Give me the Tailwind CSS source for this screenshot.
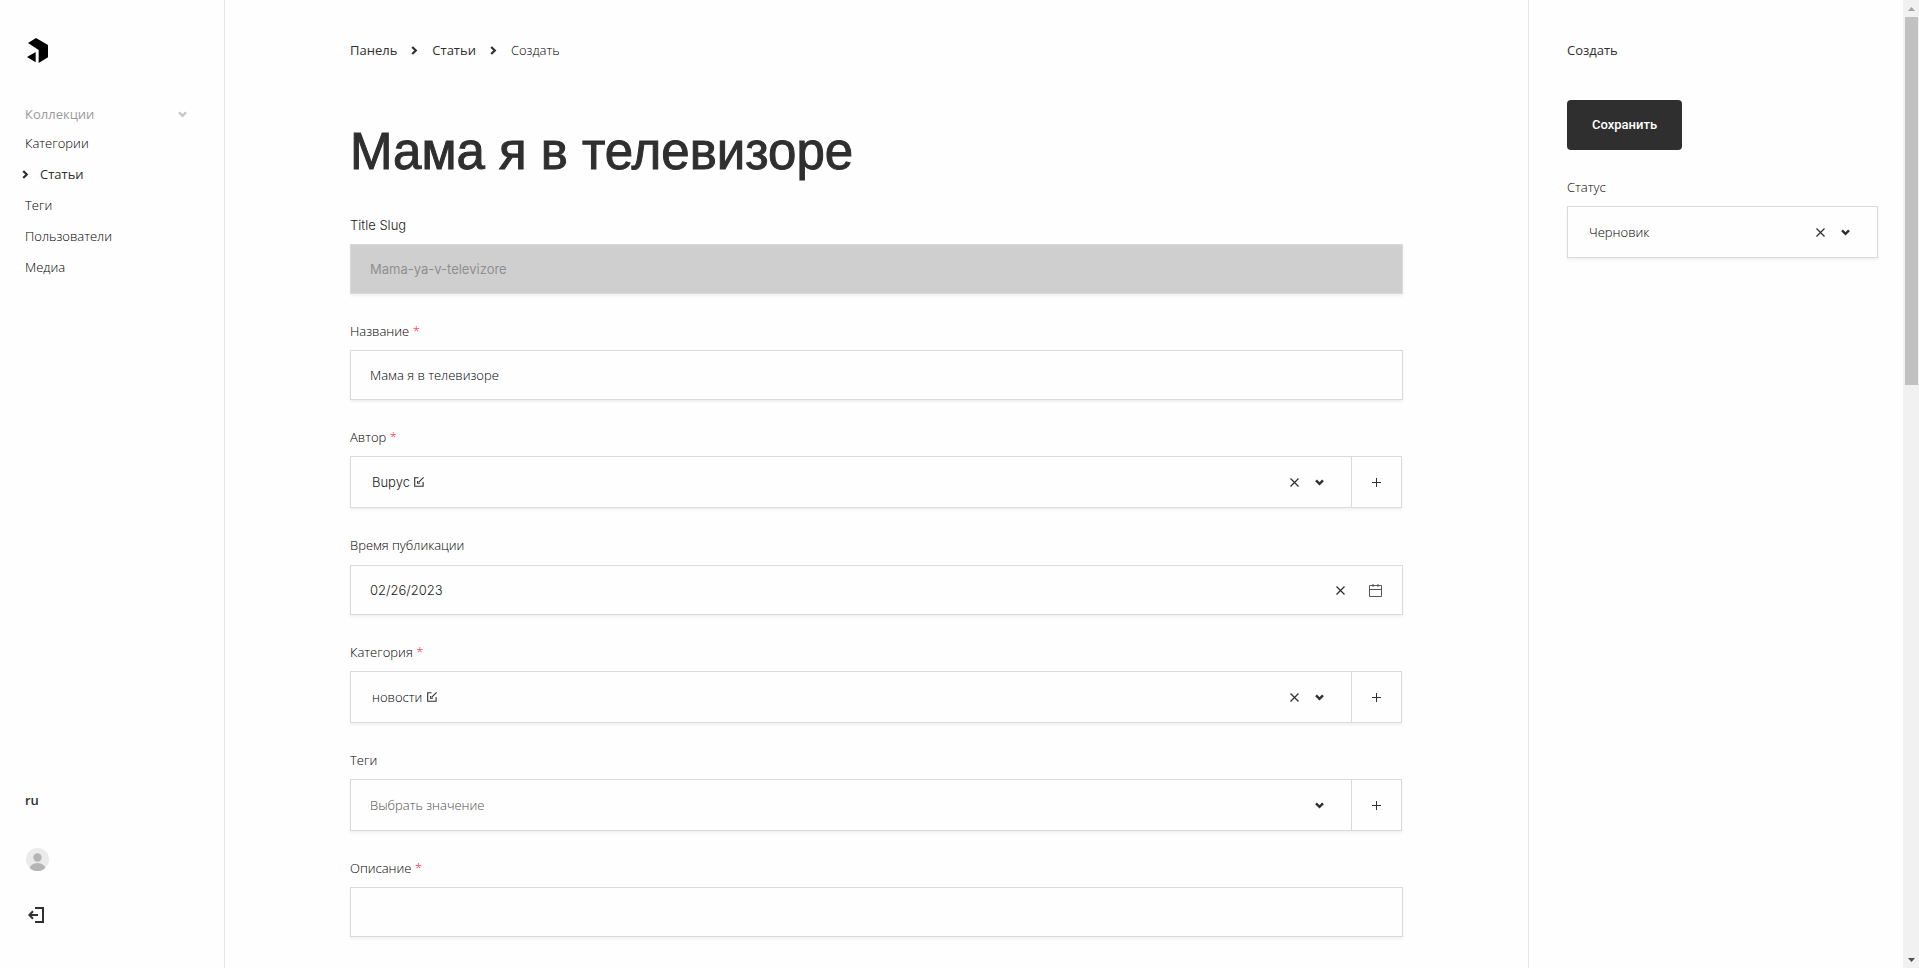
<!DOCTYPE html>
<html lang="ru">
<head>
<meta charset="utf-8">
<title>Мама я в телевизоре</title>
<script src="https://cdn.jsdelivr.net/npm/@tailwindcss/browser@4"></script>
</head>
<body class="flex h-screen overflow-hidden bg-[#fefefe] font-['Open_Sans',sans-serif] text-[13px] leading-5 font-light text-black">
<svg class="hidden" aria-hidden="true">
  <symbol id="chevron" viewBox="0 0 9 7"><path d="M1 1.3 4.5 4.8 8 1.3" fill="none" stroke="currentColor" stroke-width="2.4"/></symbol>
  <symbol id="chevron-right" viewBox="0 0 7 9"><path d="M1.2 1 4.8 4.5 1.2 8" fill="none" stroke="currentColor" stroke-width="2.2"/></symbol>
  <symbol id="cross" viewBox="0 0 9 9"><path d="M.5.5l8 8M8.500.5l-8 8" fill="none" stroke="#2f2f2f" stroke-width="1.2"/></symbol>
  <symbol id="plus" viewBox="0 0 9 9"><path d="M4.500 0v9M0 4.500h9" fill="none" stroke="#2f2f2f" stroke-width="1"/></symbol>
  <symbol id="edit" viewBox="0 0 10 10"><path d="M4.500.7H.7v8.600h8.400V5M9.600.4 4.800 5.200M3.600 4v2.300h2.300" fill="none" stroke="#2f2f2f" stroke-width="1.100"/></symbol>
</svg>

<aside class="flex w-[225px] shrink-0 flex-col border-r border-[#e6e6e6] px-[25px]">
  <a href="#" aria-label="Панель" class="mt-[38px] ml-[2px] block w-[21px] text-black">
    <svg viewBox="82 54 63 75" class="h-[25px] w-[21px]" fill="currentColor"><path d="M85 69 109 54 145 75V112L117 129V90zM82 111 108 96V127z"/></svg>
  </a>
  <nav class="mt-[41px]">
    <button class="flex w-full items-center justify-between pr-[11px] font-normal text-[#9a9a9a]">Коллекции
      <svg class="mr-px h-[7px] w-[9px] text-[#c8c8c8]"><use href="#chevron"/></svg></button>
    <ul class="mt-[9px] flex flex-col gap-[11px]">
      <li><a href="#">Категории</a></li>
      <li><a href="#" class="-ml-[3px] flex items-center gap-[11px] font-medium text-[#2f2f2f]"><svg class="h-[9px] w-[7px]"><use href="#chevron-right"/></svg>Статьи</a></li>
      <li><a href="#">Теги</a></li>
      <li><a href="#">Пользователи</a></li>
      <li><a href="#">Медиа</a></li>
    </ul>
  </nav>
  <div class="mt-auto flex flex-col items-start pb-[45px]">
    <a href="#" class="font-semibold text-[#2f2f2f]">ru</a>
    <a href="#" aria-label="Аккаунт" class="mt-[38px] ml-px">
      <svg viewBox="0 0 23 23" class="size-[23px]"><clipPath id="disc"><circle cx="11.500" cy="11.500" r="11.500"/></clipPath><g clip-path="url(#disc)"><path d="M0 0h23v23H0z" fill="#ebebeb"/><circle cx="11.500" cy="9.500" r="4.200" fill="#b5b5b5"/><ellipse cx="11.500" cy="21" rx="8" ry="6" fill="#b5b5b5"/></g></svg>
    </a>
    <a href="#" aria-label="Выйти" class="mt-9 ml-[3px] text-[#2f2f2f]">
      <svg viewBox="0 0 16 16" class="size-4" fill="none" stroke="currentColor" stroke-width="2"><path d="M7 1h8v14H7M10 8H1.500M5 4.300 1.300 8 5 11.700"/></svg>
    </a>
  </div>
</aside>

<main class="min-w-0 flex-1 overflow-hidden px-[125px] pt-10">
  <nav aria-label="Навигация" class="flex items-center font-medium text-[#2f2f2f]">
    <a href="#">Панель</a>
    <svg class="mx-[14px] h-[9px] w-[7px]"><use href="#chevron-right"/></svg>
    <a href="#">Статьи</a>
    <svg class="mx-[14px] h-[9px] w-[7px]"><use href="#chevron-right"/></svg>
    <span class="font-light text-black">Создать</span>
  </nav>
  <h1 class="mt-[62px] font-['Liberation_Sans',sans-serif] text-[51px] leading-[60px] font-normal text-[#2f2f2f] [-webkit-text-stroke:1px_#2f2f2f]">Мама я в телевизоре</h1>

  <form class="mt-[33px] flex flex-col gap-[27px]">
    <div class="flex flex-col gap-[9px]">
      <label for="slug" class="font-[Inter,sans-serif] text-[#222]">Title Slug</label>
      <input id="slug" disabled value="Mama-ya-v-televizore" class="h-[50px] w-full border border-[#dadada] bg-[#cfcfcf] px-[19px] font-[Inter,sans-serif] font-normal text-[#8f8f8f] shadow-[0_2px_3px_rgba(0,0,0,0.06)]">
    </div>
    <div class="flex flex-col gap-[9px]">
      <label for="name">Название <span class="text-[#ff2a40]">*</span></label>
      <input id="name" value="Мама я в телевизоре" class="h-[50px] w-full border border-[#dadada] px-[19px] shadow-[0_2px_3px_rgba(0,0,0,0.06)]">
    </div>
    <div class="flex flex-col gap-[9px]">
      <label for="author">Автор <span class="text-[#ff2a40]">*</span></label>
      <div class="mr-px flex h-[52px] border border-[#dadada] shadow-[0_2px_3px_rgba(0,0,0,0.06)]">
        <div class="flex flex-1 items-center pr-[27px] pl-[21px]">
          <select id="author" class="appearance-none font-[Inter,sans-serif] text-[#222]"><option>Bupyc</option></select>
          <a href="#" aria-label="Редактировать" class="ml-1"><svg class="size-[10px]"><use href="#edit"/></svg></a>
          <button type="button" aria-label="Очистить" class="ml-auto"><svg class="size-[9px]"><use href="#cross"/></svg></button>
          <svg class="ml-4 h-[7px] w-[9px] text-[#2f2f2f]"><use href="#chevron"/></svg>
        </div>
        <button type="button" aria-label="Добавить" class="flex w-[50px] items-center justify-center border-l border-[#dadada]"><svg class="size-[9px]"><use href="#plus"/></svg></button>
      </div>
    </div>
    <div class="flex flex-col gap-[10px]">
      <label for="date">Время публикации</label>
      <div class="flex h-[50px] items-center border border-[#dadada] pr-5 pl-[19px] shadow-[0_2px_3px_rgba(0,0,0,0.06)]">
        <input id="date" value="02/26/2023" class="min-w-0 flex-1 font-[Inter,sans-serif] text-[#222]">
        <button type="button" aria-label="Очистить"><svg class="size-[9px]"><use href="#cross"/></svg></button>
        <button type="button" aria-label="Календарь" class="ml-6"><svg viewBox="0 0 13 13" class="size-[13px]" fill="none" stroke="#555"><path d="M.5 1.500h12v11H.5zM.5 5.500h12M4 0v3M9 0v3"/></svg></button>
      </div>
    </div>
    <div class="flex flex-col gap-[9px]">
      <label for="category">Категория <span class="text-[#ff2a40]">*</span></label>
      <div class="mr-px flex h-[52px] border border-[#dadada] shadow-[0_2px_3px_rgba(0,0,0,0.06)]">
        <div class="flex flex-1 items-center pr-[27px] pl-[21px]">
          <select id="category" class="appearance-none"><option>новости</option></select>
          <a href="#" aria-label="Редактировать" class="ml-1"><svg class="size-[10px]"><use href="#edit"/></svg></a>
          <button type="button" aria-label="Очистить" class="ml-auto"><svg class="size-[9px]"><use href="#cross"/></svg></button>
          <svg class="ml-4 h-[7px] w-[9px] text-[#2f2f2f]"><use href="#chevron"/></svg>
        </div>
        <button type="button" aria-label="Добавить" class="flex w-[50px] items-center justify-center border-l border-[#dadada]"><svg class="size-[9px]"><use href="#plus"/></svg></button>
      </div>
    </div>
    <div class="flex flex-col gap-[9px]">
      <label for="tags">Теги</label>
      <div class="mr-px flex h-[52px] border border-[#dadada] shadow-[0_2px_3px_rgba(0,0,0,0.06)]">
        <div class="flex flex-1 items-center pr-[27px] pl-[19px]">
          <select id="tags" class="flex-1 appearance-none text-[#505050]"><option>Выбрать значение</option></select>
          <svg class="ml-4 h-[7px] w-[9px] text-[#2f2f2f]"><use href="#chevron"/></svg>
        </div>
        <button type="button" aria-label="Добавить" class="flex w-[50px] items-center justify-center border-l border-[#dadada]"><svg class="size-[9px]"><use href="#plus"/></svg></button>
      </div>
    </div>
    <div class="flex flex-col gap-[9px]">
      <label for="description">Описание <span class="text-[#ff2a40]">*</span></label>
      <input id="description" class="h-[50px] w-full border border-[#dadada] px-[19px] shadow-[0_2px_3px_rgba(0,0,0,0.06)]">
    </div>
  </form>
</main>

<aside class="flex w-[375px] shrink-0 flex-col items-start border-l border-[#e6e6e6] pt-10 pr-[25px] pl-[38px]">
  <h2 class="font-medium text-[#2f2f2f]">Создать</h2>
  <button class="mt-10 h-[50px] rounded-[4px] bg-[#2f2f2f] px-[25px] font-[Roboto,sans-serif] font-medium text-white">Сохранить</button>
  <label for="status" class="mt-[27px]">Статус</label>
  <div class="mt-[9px] flex h-[52px] w-full items-center border border-[#dadada] pr-[27px] pl-[21px] shadow-[0_2px_3px_rgba(0,0,0,0.06)]">
    <select id="status" class="flex-1 appearance-none"><option>Черновик</option></select>
    <button type="button" aria-label="Очистить"><svg class="size-[9px]"><use href="#cross"/></svg></button>
    <svg class="ml-4 h-[7px] w-[9px] text-[#2f2f2f]"><use href="#chevron"/></svg>
  </div>
</aside>

<div aria-hidden="true" class="flex w-4 shrink-0 flex-col items-center bg-[#f1f1f1]">
  <svg viewBox="0 0 16 17" class="h-[17px] w-4 shrink-0"><path d="M5 11h7L8.500 7z" fill="#a3a3a3"/></svg>
  <div class="h-[38%] w-[13px] bg-[#c1c1c1]"></div>
  <svg viewBox="0 0 16 17" class="mt-auto h-[17px] w-4 shrink-0"><path d="M5 7h7l-3.500 4z" fill="#505050"/></svg>
</div>
</body>
</html>
